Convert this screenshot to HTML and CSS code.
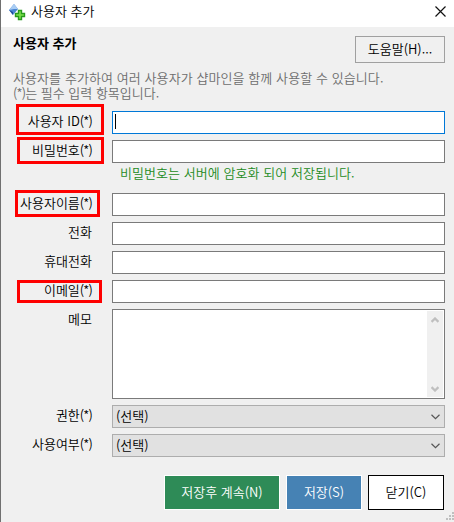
FILE: index.html
```html
<!DOCTYPE html>
<html lang="ko">
<head>
  <meta charset="UTF-8">
  <title>사용자 추가</title>
  <link rel="stylesheet" href="styles.css">
</head>
<body>
  <div class="window">
    <div class="title-bar">
      <svg class="app-icon" width="18" height="18" viewBox="0 0 18 18">
        <path d="M5 0 L9 5 L4 11 L0 6 Z" fill="#4a86d4"/>
        <path d="M5 0 L9 5 L5 5 L0 6 Z" fill="#a9cdf4"/>
        <path d="M0 6 L4 8 L4 11 Z" fill="#1c4c9c"/>
        <path d="M9.5 6.5 h3 v3 h3 v3 h-3 v3 h-3 v-3 h-3 v-3 h3 Z" fill="#7be04a" stroke="#279a1c" stroke-width="1.4"/>
      </svg>
      <span class="title">사용자 추가</span>
      <svg class="close-icon" width="11" height="11" viewBox="0 0 11 11">
        <path d="M0.5 0.5 L10.5 10.5 M10.5 0.5 L0.5 10.5" stroke="#111" stroke-width="1.2"/>
      </svg>
    </div>

    <div class="header">
      <h1>사용자 추가</h1>
      <button class="help-btn">도움말(H)...</button>
    </div>
    <p class="desc"><span class="desc-line">사용자를 추가하여 여러 사용자가 샵마인을 함께 사용할 수 있습니다.</span><br><span class="sym">(*)</span>는 필수 입력 항목입니다.</p>

    <div class="form">
      <label class="marked mark-id">사용자 ID<span class="sym">(*)</span></label>
      <div class="field focused"><span class="caret"></span></div>

      <label class="marked mark-pw">비밀번호<span class="sym">(*)</span></label>
      <div class="field"></div>

      <div class="hint">비밀번호는 서버에 암호화 되어 저장됩니다.</div>

      <label class="marked mark-name">사용자이름<span class="sym">(*)</span></label>
      <div class="field"></div>

      <label>전화</label>
      <div class="field"></div>

      <label>휴대전화</label>
      <div class="field"></div>

      <label class="marked mark-email">이메일<span class="sym">(*)</span></label>
      <div class="field"></div>

      <label>메모</label>
      <div class="field memo">
        <div class="scrollbar">
          <svg width="8" height="6" viewBox="0 0 8 6"><path d="M0.5 4.8 L4 1.5 L7.5 4.8" fill="none" stroke="#bfbfbf" stroke-width="2.3"/></svg>
          <svg width="8" height="6" viewBox="0 0 8 6"><path d="M0.5 1.2 L4 4.5 L7.5 1.2" fill="none" stroke="#bfbfbf" stroke-width="2.3"/></svg>
        </div>
      </div>

      <label>권한<span class="sym">(*)</span></label>
      <div class="field select">
        <span>(선택)</span>
        <svg width="9" height="6" viewBox="0 0 9 6"><path d="M0.5 0.8 L4.5 4.6 L8.5 0.8" fill="none" stroke="#555" stroke-width="1.2"/></svg>
      </div>

      <label>사용여부<span class="sym">(*)</span></label>
      <div class="field select">
        <span>(선택)</span>
        <svg width="9" height="6" viewBox="0 0 9 6"><path d="M0.5 0.8 L4.5 4.6 L8.5 0.8" fill="none" stroke="#555" stroke-width="1.2"/></svg>
      </div>
    </div>

    <div class="buttons">
      <button class="btn btn-continue">저장후 계속(N)</button>
      <button class="btn btn-save">저장(S)</button>
      <button class="btn btn-close">닫기(C)</button>
    </div>

    <svg class="grip" width="8" height="8" viewBox="0 0 8 8" fill="#bfbfbf">
      <path d="M6 0h2v2h-2z M3 3h2v2h-2z M6 3h2v2h-2z M0 6h2v2h-2z M3 6h2v2h-2z M6 6h2v2h-2z"/>
    </svg>
  </div>
</body>
</html>
```

FILE: styles.css
```css
*,
*::after {
  box-sizing: border-box;
}

body {
  margin: 0;
  font-family: "Noto Sans CJK KR", sans-serif;
  font-size: 13px;
  font-weight: 350;
  line-height: 15px;
  color: #000;
}

.window {
  position: relative;
  width: 454px;
  height: 522px;
  background-color: #f0f0f0;
  border-left: 1px solid #707070;
  overflow: hidden;
}

.title-bar {
  display: flex;
  align-items: center;
  height: 27px;
  padding: 0 8px 4px 8px;
  background-color: #fff;
}

.app-icon {
  margin-top: 3px;
}

.title {
  margin: -2px 0 0 4px;
}

.close-icon {
  margin-left: auto;
}

.header {
  display: flex;
  justify-content: space-between;
  height: 43px;
  padding: 9px 9px 0 12px;
}

h1 {
  margin: -1px 0 0;
  font-size: 13px;
  line-height: 15px;
}

button {
  padding: 0 0 2px;
  font: inherit;
  color: #000;
}

.help-btn {
  width: 90px;
  height: 27px;
  background-color: #f0f0f0;
  border: 1px solid #a0a0a0;
}

.desc {
  height: 41px;
  margin: 0;
  padding-left: 12px;
  color: #6d6d6d;
  white-space: nowrap;
}

.desc-line {
  letter-spacing: 0.08px;
}

.sym {
  letter-spacing: -0.8px;
}

.form {
  display: grid;
  grid-template-columns: 91px 333px;
  column-gap: 20px;
  row-gap: 6px;
}

label {
  position: relative;
  height: 23px;
  padding-top: 2px;
  text-align: right;
  white-space: nowrap;
}

.marked::after {
  content: "";
  position: absolute;
  border: 3px solid #fe0000;
}

.mark-id::after {
  left: 15px;
  top: -7px;
  width: 88px;
  height: 31px;
}

.mark-pw::after {
  left: 16px;
  top: -3px;
  width: 87px;
  height: 27px;
}

.mark-name::after {
  left: 14px;
  top: -3px;
  width: 85px;
  height: 27px;
}

.mark-email::after {
  left: 16px;
  top: 0;
  width: 85px;
  height: 23px;
}

.field {
  height: 23px;
  background-color: #fff;
  border: 1px solid #7a7a7a;
}

.focused {
  padding: 2px;
  border-color: #0078d7;
}

.caret {
  display: block;
  width: 1px;
  height: 15px;
  background-color: #000;
}

.hint {
  grid-column: 2;
  height: 18px;
  padding-left: 8px;
  color: #228b22;
  line-height: 8px;
  letter-spacing: 0.05px;
}

.memo {
  display: flex;
  justify-content: flex-end;
  height: 90px;
  padding: 1px;
}

.scrollbar {
  display: flex;
  flex-direction: column;
  align-items: center;
  justify-content: space-between;
  width: 16px;
  padding: 6px 0 5px;
  background-color: #f0f0f0;
}

.select {
  display: flex;
  align-items: center;
  justify-content: space-between;
  padding: 0 4px 0 3px;
  background-color: #e1e1e1;
  border-color: #adadad;
}

.select span {
  margin-top: -2px;
}

.buttons {
  display: flex;
  justify-content: flex-end;
  gap: 6px;
  padding: 18px 10px 0 0;
}

.btn {
  width: 76px;
  height: 35px;
  color: #fff;
  border: 1px solid #fff;
}

.btn-continue {
  width: 116px;
  background-color: #2e8b57;
}

.btn-save {
  background-color: #4682b4;
}

.btn-close {
  color: #000;
  background-color: #fff;
  border-color: #000;
}

.grip {
  position: absolute;
  right: 0;
  bottom: 2px;
}
```
